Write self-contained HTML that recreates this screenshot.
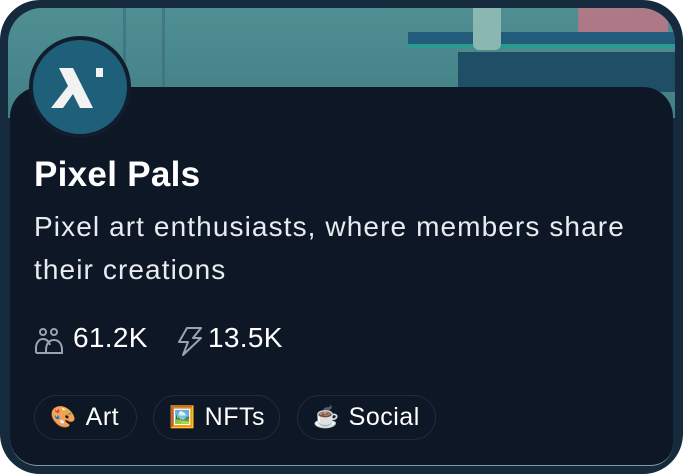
<!DOCTYPE html>
<html><head><style>
body{margin:0;width:683px;height:474px;background:#fff;overflow:hidden;font-family:"Liberation Sans",sans-serif}
.card{position:absolute;left:0;top:0;width:683px;height:474px;border-radius:40px;background:#152a3c;overflow:hidden}
.banner{position:absolute;left:8px;top:8px;width:667px;height:110px;border-radius:34px 34px 0 0;background:linear-gradient(180deg,#4f8f92,#417f86);overflow:hidden}
.panel{position:absolute;left:10px;top:87px;width:663px;height:378px;background:#0e1726;border-radius:30px 30px 22px 28px;border-bottom:1px solid #8a96a3}
.av{position:absolute;left:29px;top:36px;width:94px;height:94px;border-radius:50%;background:#1e5f7a;border:4px solid #121d2c}
.pill{position:absolute;top:395px;height:45px;border:1.5px solid #1f2b3c;border-radius:24px;color:#fff;font-size:25px;line-height:43px;box-sizing:border-box;padding-left:15px;letter-spacing:.5px}
.pill span{font-size:21px;margin-right:9px;vertical-align:1px}
</style></head><body>
<div class="card">
<div class="banner">
 <div style="position:absolute;left:115px;top:0;width:36px;height:80px;border-left:3px solid #3e6f80;border-right:3px solid #3e6f80;opacity:.7"></div>
 <div style="position:absolute;left:400px;top:24px;width:270px;height:14px;background:#235c7a"></div>
 <div style="position:absolute;left:400px;top:36px;width:270px;height:4px;background:#2a9a8f"></div>
 <div style="position:absolute;left:450px;top:44px;width:220px;height:40px;background:#1e4f66"></div>
 <div style="position:absolute;left:465px;top:0;width:28px;height:42px;background:#8ab8b0;border-radius:0 0 6px 6px"></div>
 <div style="position:absolute;left:570px;top:0;width:90px;height:24px;background:#c07585;opacity:.85"></div>
</div>
<div class="panel"></div>
<div class="av"><svg width="94" height="94" viewBox="0 0 94 94"><path d="M26 28h14l20 40h-13l-7-14-10 14h-12l17-22z" fill="#f2f2f2"/><rect x="63" y="28" width="7" height="9" fill="#f2f2f2"/></svg></div>
<div style="position:absolute;left:34px;top:155px;color:#fff;font-size:35px;font-weight:bold;letter-spacing:.3px">Pixel Pals</div>
<div style="position:absolute;left:34px;top:205px;width:640px;color:#e8ecf0;font-size:28px;line-height:43px;letter-spacing:1.1px">Pixel art enthusiasts, where members share their creations</div>
<svg style="position:absolute;left:34px;top:326px" width="30" height="30" viewBox="0 0 30 30" fill="none" stroke="#9aa4b0" stroke-width="2"><circle cx="9" cy="6" r="3"/><circle cx="20" cy="6" r="3"/><path d="M2 27v-5c0-5 3-9 7-9s6 3 7 6M12 27v-3c0-6 3-10 8-10s8 4 8 10v3H12M2 27h10"/></svg>
<div style="position:absolute;left:73px;top:322px;color:#fff;font-size:28px;letter-spacing:.3px">61.2K</div>
<svg style="position:absolute;left:175px;top:326px" width="30" height="30" viewBox="0 0 30 30" fill="none" stroke="#9aa4b0" stroke-width="2" stroke-linejoin="round"><path d="M12 2h14l-8 10h8L8 29l5-13H4z"/></svg>
<div style="position:absolute;left:208px;top:322px;color:#fff;font-size:28px;letter-spacing:.3px">13.5K</div>
<div class="pill" style="left:34px;width:103px"><span>🎨</span>Art</div>
<div class="pill" style="left:153px;width:127px"><span>🖼️</span>NFTs</div>
<div class="pill" style="left:297px;width:139px"><span>☕</span>Social</div>
</div>
</body></html>
